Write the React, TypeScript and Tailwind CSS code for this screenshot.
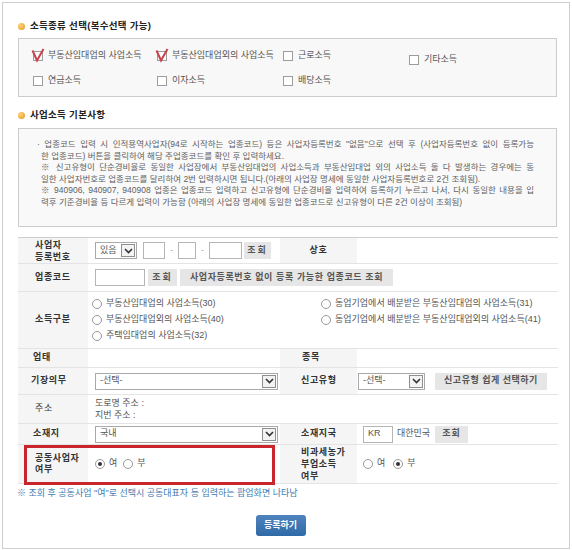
import React from 'react'

const font = "font-['Liberation_Sans','Noto_Sans_CJK_KR',sans-serif]"

function Check({ checked }: { checked?: boolean }) {
  return (
    <span className="relative inline-block w-[10px] h-[10px] border border-[#9c9c9c] bg-white mr-[5px] shrink-0">
      {checked && (
        <svg className="absolute -left-[3px] -top-[4px]" width="14" height="15" viewBox="0 0 14 15">
          <path d="M1.5 2.5 L6 12.5 L12.5 1" stroke="#c8434b" strokeWidth="2" fill="none" />
        </svg>
      )}
    </span>
  )
}

function Radio({ checked }: { checked?: boolean }) {
  return (
    <span className="inline-flex items-center justify-center w-[10px] h-[10px] rounded-full border border-[#9a9a9a] bg-white mr-[4px] shrink-0">
      {checked && <span className="w-[4px] h-[4px] rounded-full bg-[#333]" />}
    </span>
  )
}

function Select({ value, className }: { value: string; className: string }) {
  return (
    <div className={`flex items-center h-[17px] border border-[#a9a9a9] bg-white ${className}`}>
      <span className="flex-1 pl-[4px] text-[#555]">{value}</span>
      <span className="w-[14px] h-[13px] mr-[1px] border border-[#8f8f8f] bg-[#f3f3f3] flex items-center justify-center">
        <svg width="9" height="6" viewBox="0 0 9 6">
          <path d="M1 1 L4.5 4.5 L8 1" stroke="#333" strokeWidth="1.6" fill="none" />
        </svg>
      </span>
    </div>
  )
}

function Btn({ children, className = '' }: { children: React.ReactNode; className?: string }) {
  return (
    <span className={`inline-flex items-center justify-center h-[17px] bg-[#e6e6e6] text-[#555] font-bold whitespace-nowrap shrink-0 ${className}`}>
      {children}
    </span>
  )
}

function Input({ className }: { className: string }) {
  return <span className={`inline-block h-[17px] border border-[#b5b5b5] bg-white shrink-0 ${className}`} />
}

function Heading({ children }: { children: React.ReactNode }) {
  return (
    <div className="flex items-center h-[12px]">
      <span className="w-[7px] h-[7px] rounded-full bg-[radial-gradient(circle_at_35%_35%,#ffd27a,#e39a1c)] mr-[5px]" />
      <span className="text-[9.5px] font-bold text-[#222] tracking-[0.3px]">{children}</span>
    </div>
  )
}

const label = 'bg-[#f5f5f5] border-b border-[#e4e4e4] flex items-center font-bold text-[#333] tracking-[0.6px]'
const cell = 'border-b border-[#e4e4e4] flex items-center'
// 줄바꿈된 안내문 줄은 양끝 맞춤
const full = 'w-[493px] text-justify [text-align-last:justify]'

export default function App() {
  return (
    <div className={`w-[572px] h-[550px] bg-white p-[2px] text-[9px] text-[#555] ${font}`}>
      <div className="w-[568px] h-[547px] border border-[#cfcfcf] pl-[15px] pr-[12px] pt-[17px]">
        {/* 소득종류 */}
        <Heading>소득종류 선택(복수선택 가능)</Heading>
        <div className="mt-[6px] h-[59px] border border-[#cccccc] bg-[#f8f8f8] pl-[14px] pt-[10px] grid grid-cols-[124px_126px_126px_1fr] gap-y-[7px] content-start">
          <div className="flex items-center h-[14px]"><Check checked />부동산임대업의 사업소득</div>
          <div className="flex items-center h-[14px]"><Check checked />부동산임대업외의 사업소득</div>
          <div className="flex items-center h-[14px]"><Check />근로소득</div>
          <div className="flex items-center h-[14px] mt-[4px]"><Check />기타소득</div>
          <div className="flex items-center h-[14px]"><Check />연금소득</div>
          <div className="flex items-center h-[14px]"><Check />이자소득</div>
          <div className="flex items-center h-[14px]"><Check />배당소득</div>
        </div>

        {/* 사업소득 기본사항 */}
        <div className="mt-[12px]">
          <Heading>사업소득 기본사항</Heading>
        </div>
        <div className="mt-[7px] h-[99px] border border-[#cccccc] bg-[#f9f9f9] pl-[22px] pt-[10px] text-[8.5px] leading-[11.6px] text-[#5f5f5f] whitespace-nowrap">
          <div className={`-ml-[4px] w-[497px] text-justify [text-align-last:justify]`}>· 업종코드 입력 시 인적용역사업자(94로 시작하는 업종코드) 등은 사업자등록번호 "없음"으로 선택 후 (사업자등록번호 없이 등록가능</div>
          <div>한 업종코드) 버튼을 클릭하여 해당 주업종코드를 확인 후 입력하세요.</div>
          <div className={full}>※ 신고유형이 단순경비율로 동일한 사업장에서 부동산임대업의 사업소득과 부동산임대업 외의 사업소득 둘 다 발생하는 경우에는 동</div>
          <div>일한 사업자번호로 업종코드를 달리하여 2번 입력하시면 됩니다.(아래의 사업장 명세에 동일한 사업자등록번호로 2건 조회됨).</div>
          <div className={full}>※ 940906, 940907, 940908 업종은 업종코드 입력하고 신고유형에 단순경비율 입력하여 등록하기 누르고 나서, 다시 동일한 내용을 입</div>
          <div>력후 기준경비율 등 다르게 입력이 가능함 (아래의 사업장 명세에 동일한 업종코드로 신고유형이 다른 2건 이상이 조회됨)</div>
        </div>

        {/* 입력 테이블 */}
        <div className="relative mt-[10px] w-[540px] border-t border-[#cfcfcf] grid grid-cols-[70px_192px_77px_1fr] grid-rows-[26px_28px_57px_19px_27px_29px_21px_39px]">
          <div className={`${label} pl-[17px] leading-[12px]`}>사업자<br />등록번호</div>
          <div className={`${cell} pl-[7px] gap-[6px]`}>
            <Select value="있음" className="w-[42px]" />
            <span className="flex items-center gap-[5px]">
              <Input className="w-[22px]" />
              <span className="text-[#aaa]">-</span>
              <Input className="w-[18px]" />
              <span className="text-[#aaa]">-</span>
              <Input className="w-[33px]" />
            </span>
            <Btn className="w-[27px] -ml-[4px] tracking-[2px]">조회</Btn>
          </div>
          <div className={`${label} justify-center`}>상호</div>
          <div className={cell} />

          <div className={`${label} pl-[17px]`}>업종코드</div>
          <div className={`${cell} col-span-3 pl-[7px]`}>
            <Input className="w-[50px]" />
            <Btn className="ml-[3px] w-[29px] tracking-[2px]">조회</Btn>
            <Btn className="ml-[3px] w-[213px] tracking-[0.6px]">사업자등록번호 없이 등록 가능한 업종코드 조회</Btn>
          </div>

          <div className={`${label} pl-[17px]`}>소득구분</div>
          <div className={`${cell} col-span-3 pl-[4px] grid grid-cols-[229px_1fr] content-center gap-y-[4px]`}>
            <div className="flex items-center h-[12px]"><Radio />부동산임대업의 사업소득(30)</div>
            <div className="flex items-center h-[12px]"><Radio />동업기업에서 배분받은 부동산임대업의 사업소득(31)</div>
            <div className="flex items-center h-[12px]"><Radio />부동산임대업외의 사업소득(40)</div>
            <div className="flex items-center h-[12px]"><Radio />동업기업에서 배분받은 부동산임대업외의 사업소득(41)</div>
            <div className="flex items-center h-[12px]"><Radio />주택임대업의 사업소득(32)</div>
          </div>

          <div className={`${label} pl-[15px]`}>업태</div>
          <div className={cell} />
          <div className={`${label} pl-[22px]`}>종목</div>
          <div className={cell} />

          <div className={`${label} pl-[13px]`}>기장의무</div>
          <div className={`${cell} pl-[7px]`}>
            <Select value="-선택-" className="w-[183px]" />
          </div>
          <div className={`${label} pl-[21px]`}>신고유형</div>
          <div className={`${cell} pl-[1px]`}>
            <Select value="-선택-" className="w-[67px]" />
            <Btn className="ml-[10px] w-[112px] tracking-[0.5px]">신고유형 쉽게 선택하기</Btn>
          </div>

          <div className={`${label} pl-[17px] font-normal`}>주소</div>
          <div className={`${cell} col-span-3 pl-[7px] flex-col items-start justify-center leading-[12px]`}>
            <div>도로명 주소 :</div>
            <div>지번 주소 :</div>
          </div>

          <div className={`${label} pl-[15px]`}>소재지</div>
          <div className={`${cell} pl-[7px]`}>
            <Select value="국내" className="w-[183px]" />
          </div>
          <div className={`${label} pl-[21px]`}>소재지국</div>
          <div className={`${cell} pl-[6px]`}>
            <span className="inline-flex items-center h-[17px] w-[30px] border border-[#b5b5b5] bg-white pl-[4px]">KR</span>
            <span className="ml-[4px]">대한민국</span>
            <Btn className="ml-[5px] w-[33px] tracking-[1px]">조회</Btn>
          </div>

          <div className={`${label} pl-[17px] leading-[11px]`}>공동사업자<br />여부</div>
          <div className={`${cell} pl-[7px]`}>
            <Radio checked /><span className="mr-[6px]">여</span>
            <Radio /><span>부</span>
          </div>
          <div className={`${label} pl-[21px] leading-[12px]`}>비과세농가<br />부업소득<br />여부</div>
          <div className={`${cell} pl-[6px]`}>
            <Radio /><span className="mr-[8px]">여</span>
            <Radio checked /><span>부</span>
          </div>

          {/* 강조 표시 */}
          <div className="absolute left-[6px] top-[207px] w-[251px] h-[40px] border-[3px] border-[#c8262c]" />
        </div>

        <div className="mt-[4px] h-[12px] flex items-center text-[#3f7bb0] -ml-[1px]">
          ※ 조회 후 공동사업 "여"로 선택시 공동대표자 등 입력하는 팝업화면 나타남
        </div>

        <div className="mt-[15px] flex justify-center pr-[14px]">
          <span className="inline-flex items-center justify-center w-[50px] h-[21px] rounded-[3px] bg-[linear-gradient(#4f83bd,#2f6aa6)] text-white font-bold text-[9px]">
            등록하기
          </span>
        </div>
      </div>
    </div>
  )
}
